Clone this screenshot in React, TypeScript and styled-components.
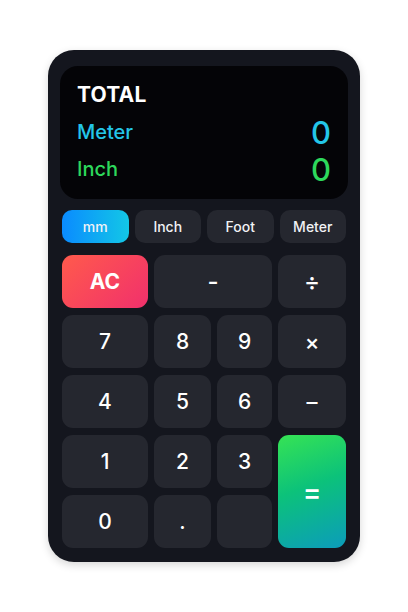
import React from "react";
import styled, { createGlobalStyle } from "styled-components";

const Global = createGlobalStyle`
  html, body { margin: 0; padding: 0; background: #ffffff; }
  body { font-family: Inter, "Noto Sans", sans-serif; }
`;

const Page = styled.div`
  width: 408px;
  height: 612px;
  padding-top: 50px;
  box-sizing: border-box;
  display: flex;
  justify-content: center;
`;

const Card = styled.div`
  width: 312px;
  height: 512px;
  box-sizing: border-box;
  background: #14161e;
  border-radius: 26px;
  padding: 16px 12px 14px 12px;
  box-shadow: 0 3px 8px rgba(0, 0, 0, 0.16);
  display: flex;
  flex-direction: column;
`;

const Display = styled.div`
  height: 134px;
  box-sizing: border-box;
  background: #040407;
  border-radius: 18px;
  padding: 16px 17px 0 17px;
  display: flex;
  flex-direction: column;
`;

const Total = styled.div`
  color: #ffffff;
  font-size: 21px;
  font-weight: 700;
  line-height: 26px;
  letter-spacing: 0.2px;
`;

const ReadRow = styled.div<{ $color: string; $top: number }>`
  display: flex;
  justify-content: space-between;
  align-items: center;
  color: ${(p) => p.$color};
  margin-top: ${(p) => p.$top}px;
  height: 34px;
`;

const ReadLabel = styled.span`
  font-size: 20px;
  font-weight: 500;
`;

const ReadValue = styled.span`
  font-size: 31px;
  font-weight: 500;
`;

const Units = styled.div`
  margin: 11px 2px 0 2px;
  display: grid;
  grid-template-columns: repeat(4, 1fr);
  gap: 6px;
`;

const UnitButton = styled.button<{ $active?: boolean }>`
  height: 33px;
  border: none;
  border-radius: 10px;
  font-family: Inter, "Noto Sans", sans-serif;
  font-size: 14px;
  font-weight: 500;
  color: #f1f2f5;
  background: ${(p) =>
    p.$active ? "linear-gradient(90deg, #0a8bff 0%, #13c7e6 100%)" : "#25272f"};
  padding: 0;
`;

const Keypad = styled.div`
  margin: 12px 2px 0 2px;
  display: grid;
  grid-template-columns: 86px 57px 55px 68px;
  grid-auto-rows: 53px;
  column-gap: 6px;
  row-gap: 7px;
`;

const Key = styled.button<{ $variant?: "ac" | "eq"; $span?: number; $rows?: number; $size?: number }>`
  border: none;
  border-radius: 11px;
  font-family: Inter, "Noto Sans", sans-serif;
  font-size: ${(p) => p.$size ?? 21}px;
  font-weight: ${(p) => (p.$variant === "ac" ? 700 : 500)};
  color: #ffffff;
  padding: 0;
  grid-column: span ${(p) => p.$span ?? 1};
  grid-row: span ${(p) => p.$rows ?? 1};
  background: ${(p) =>
    p.$variant === "ac"
      ? "linear-gradient(135deg, #ff5a4c 0%, #f1306c 100%)"
      : p.$variant === "eq"
      ? "linear-gradient(160deg, #36e354 0%, #0cc27a 45%, #0c9cbb 100%)"
      : "#25272f"};
`;

export default function App() {
  const units = ["mm", "Inch", "Foot", "Meter"];
  return (
    <>
      <Global />
      <Page>
        <Card>
          <Display>
            <Total>TOTAL</Total>
            <ReadRow $color="#23c6e8" $top={7}>
              <ReadLabel>Meter</ReadLabel>
              <ReadValue>0</ReadValue>
            </ReadRow>
            <ReadRow $color="#2dd85c" $top={3}>
              <ReadLabel>Inch</ReadLabel>
              <ReadValue>0</ReadValue>
            </ReadRow>
          </Display>
          <Units>
            {units.map((u, i) => (
              <UnitButton key={u} $active={i === 0}>
                {u}
              </UnitButton>
            ))}
          </Units>
          <Keypad>
            <Key $variant="ac">AC</Key>
            <Key $span={2} $size={24}>-</Key>
            <Key $size={24}>÷</Key>
            <Key>7</Key>
            <Key>8</Key>
            <Key>9</Key>
            <Key $size={22}>×</Key>
            <Key>4</Key>
            <Key>5</Key>
            <Key>6</Key>
            <Key $size={22}>–</Key>
            <Key>1</Key>
            <Key>2</Key>
            <Key>3</Key>
            <Key $variant="eq" $rows={2} $size={28}>=</Key>
            <Key>0</Key>
            <Key>.</Key>
            <Key></Key>
          </Keypad>
        </Card>
      </Page>
    </>
  );
}
